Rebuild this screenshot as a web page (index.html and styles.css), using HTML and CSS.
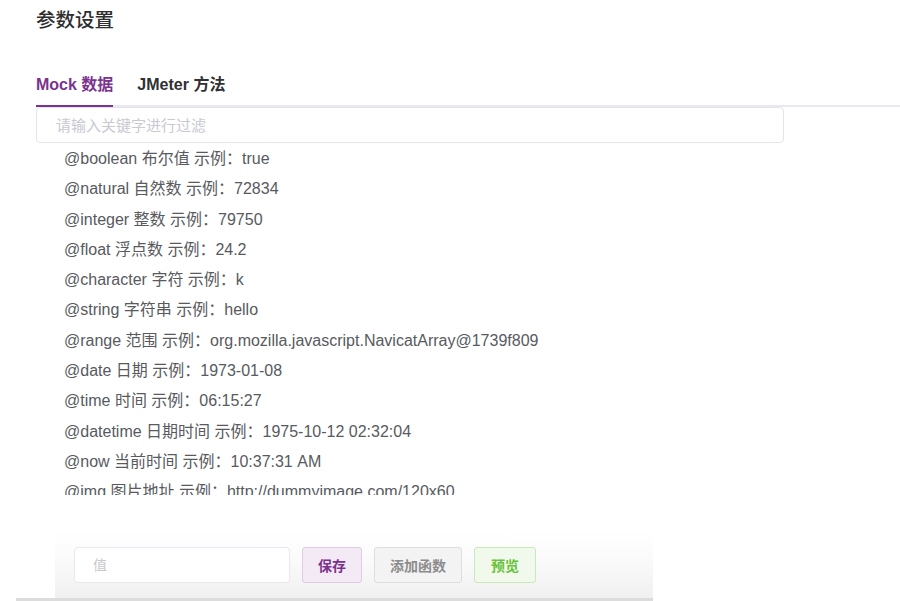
FILE: index.html
```html
<!DOCTYPE html>
<html lang="zh-CN">
<head>
<meta charset="utf-8">
<title>参数设置</title>
<link rel="stylesheet" href="styles.css">
</head>
<body>
<div class="page">
  <div class="top">
    <h3 class="title">参数设置</h3>
    <div class="tabs">
      <div class="tab active">Mock 数据</div>
      <div class="tab">JMeter 方法</div>
    </div>
    <input class="filter" type="text" placeholder="请输入关键字进行过滤">
    <ul class="list">
      <li>@boolean 布尔值 示例：true</li>
      <li>@natural 自然数 示例：72834</li>
      <li>@integer 整数 示例：79750</li>
      <li>@float 浮点数 示例：24.2</li>
      <li>@character 字符 示例：k</li>
      <li>@string 字符串 示例：hello</li>
      <li>@range 范围 示例：org.mozilla.javascript.NavicatArray@1739f809</li>
      <li>@date 日期 示例：1973-01-08</li>
      <li>@time 时间 示例：06:15:27</li>
      <li>@datetime 日期时间 示例：1975-10-12 02:32:04</li>
      <li>@now 当前时间 示例：10:37:31 AM</li>
      <li>@img 图片地址 示例：http://dummyimage.com/120x60</li>
    </ul>
  </div>
  <div class="footer">
    <div class="footer-inner">
      <input class="value" type="text" placeholder="值">
      <button class="btn btn-save">保存</button>
      <button class="btn btn-func">添加函数</button>
      <button class="btn btn-preview">预览</button>
    </div>
  </div>
</div>
</body>
</html>
```
FILE: styles.css
```css
* { box-sizing: border-box; }
html, body {
  margin: 0;
  padding: 0;
  background: #fff;
  font-family: "Liberation Sans", "Noto Sans CJK SC", sans-serif;
  overflow: hidden;
}
.page {
  width: 900px;
  height: 601px;
}
.top {
  padding-left: 36px;
}
.title {
  margin: 8px 0 0 0;
  height: 24px;
  line-height: 24px;
  font-size: 19.5px;
  font-weight: 500;
  color: #2e2e30;
}
.tabs {
  margin-top: 33px;
  display: flex;
  gap: 24px;
  border-bottom: 2px solid #e9e9ef;
}
.tab {
  position: relative;
  height: 40px;
  line-height: 40px;
  font-size: 16px;
  font-weight: bold;
  color: #303133;
}
.tab.active {
  color: #7b338f;
}
.tab.active::after {
  content: "";
  position: absolute;
  left: 0;
  right: 0;
  bottom: -2px;
  height: 2px;
  background: #7b338f;
}
.filter {
  display: block;
  width: 748px;
  height: 36px;
  margin: 0;
  padding: 0 19px;
  border: 1px solid #e4e4ec;
  border-radius: 4px;
  font-family: inherit;
  font-size: 15px;
  color: #606266;
  outline: none;
}
.filter::placeholder { color: #c8c9d1; }
.list {
  list-style: none;
  margin: 0;
  padding: 1px 0 0 28px;
  height: 352px;
  overflow: hidden;
}
.list li {
  height: 30.3px;
  line-height: 30.3px;
  font-size: 16px;
  color: #585a60;
  white-space: nowrap;
}
.footer {
  margin: 35px 0 0 16px;
  width: 637px;
  border-bottom: 3px solid #dcdcdc;
}
.footer-inner {
  margin-left: 39px;
  height: 68px;
  padding: 17px 0 0 19px;
  display: flex;
  align-items: flex-start;
  background: linear-gradient(to bottom, #ffffff 0%, #fbfbfb 40%, #f0f0f0 100%);
}
.value {
  width: 216px;
  height: 36px;
  margin: 0 12px 0 0;
  padding: 0 18px;
  border: 1px solid #ece6ee;
  border-radius: 4px;
  background: #fff;
  font-family: inherit;
  font-size: 14px;
  outline: none;
}
.value::placeholder { color: #c9c9c9; }
.btn {
  height: 36px;
  padding: 0 15px;
  margin: 0 12px 0 0;
  border: 1px solid #dcdcdc;
  border-radius: 3px;
  font-family: inherit;
  font-size: 14px;
  font-weight: bold;
  cursor: pointer;
}
.btn-save {
  background: #f4eaf6;
  border-color: #dfcbe4;
  color: #7b338f;
}
.btn-func {
  background: #f3f3f4;
  border-color: #dedede;
  color: #8c8c8c;
}
.btn-preview {
  margin-right: 0;
  padding: 0 16px;
  background: #f0f9eb;
  border-color: #c9eab8;
  color: #67c23a;
}
```
